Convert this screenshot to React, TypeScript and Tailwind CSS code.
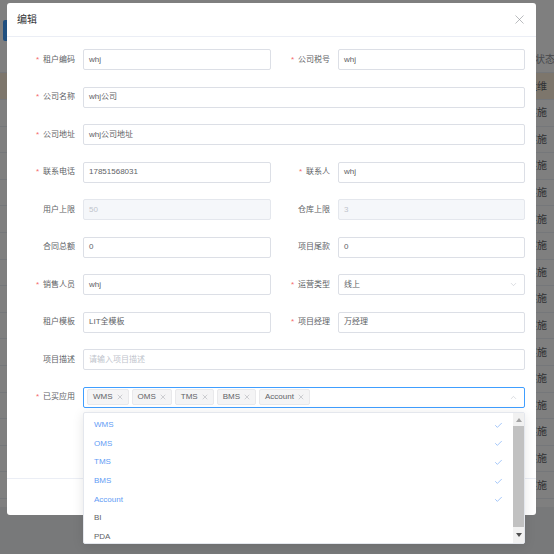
import { X, ChevronDown, ChevronUp, Check } from "lucide-react";
import clsx from "clsx";

type Field = {
  label: string;
  required?: boolean;
  value?: string;
  placeholder?: string;
  disabled?: boolean;
  select?: boolean;
};

const Label = (props: { field: Field; className: string }) => (
  <div
    className={clsx(
      "shrink-0 whitespace-nowrap pr-[8px] text-right text-[8px] text-[#606266]",
      props.className
    )}
  >
    {props.field.required && <span className="mr-[4px] text-[#f56c6c]">*</span>}
    {props.field.label}
  </div>
);

const Input = (props: { field: Field; className: string }) => {
  const f = props.field;
  return (
    <div
      className={clsx(
        "flex h-[21px] shrink-0 items-center rounded-[2px] border pl-[5px] pr-[6px] text-[8px]",
        f.disabled
          ? "border-[#e4e7ed] bg-[#f5f7fa] text-[#c0c4cc]"
          : "border-[#dcdfe6] bg-white text-[#606266]",
        props.className
      )}
    >
      <span className="flex-1 whitespace-nowrap">
        {f.value ?? <span className="text-[#c0c4cc]">{f.placeholder}</span>}
      </span>
      {f.select && <ChevronDown size={9} strokeWidth={1.5} className="text-[#c0c4cc]" />}
    </div>
  );
};

const Pair = (props: { left: Field; right: Field }) => (
  <div className="flex items-center">
    <div className="flex w-[264px] items-center">
      <Label field={props.left} className="w-[76px]" />
      <Input field={props.left} className="w-[188px]" />
    </div>
    <div className="flex w-[254px] items-center">
      <Label field={props.right} className="w-[67px]" />
      <Input field={props.right} className="w-[187px]" />
    </div>
  </div>
);

const Full = (props: { field: Field }) => (
  <div className="flex items-center">
    <Label field={props.field} className="w-[76px]" />
    <Input field={props.field} className="w-[442px]" />
  </div>
);

const apps = ["WMS", "OMS", "TMS", "BMS", "Account"];
const options = [
  { name: "WMS", on: true },
  { name: "OMS", on: true },
  { name: "TMS", on: true },
  { name: "BMS", on: true },
  { name: "Account", on: true },
  { name: "BI", on: false },
  { name: "PDA", on: false },
];

const bgRows = Array.from({ length: 15 });

export default function App() {
  return (
    <div className="relative h-[554px] w-[554px] overflow-hidden bg-[#f0f2f5] font-['Liberation_Sans','Noto_Sans_CJK_SC',sans-serif]">
      {/* page behind the dialog */}
      <div className="h-[507px] bg-white pt-[20px]">
        <div className="ml-[3px] h-[21px] w-[60px] rounded-[2px] bg-[#409eff]" />
        <div className="mt-[6px] text-[10px] text-[#606266]">
          <div className="flex h-[26px] items-center border-b border-[#ebeef5]">
            <div className="flex-1" />
            <div className="w-[19px] whitespace-nowrap text-[#909399]">状态</div>
          </div>
          <div className="flex h-[27px] items-center border-b border-[#ebeef5] bg-[#faecd8]">
            <div className="flex-1" />
            <div className="w-[27px] whitespace-nowrap">运维</div>
          </div>
          {bgRows.map((_, i) => (
            <div key={i} className="flex h-[26.6px] items-center border-b border-[#ebeef5]">
              <div className="flex-1" />
              <div className="w-[27px] whitespace-nowrap">实施</div>
            </div>
          ))}
        </div>
      </div>

      <div className="absolute inset-0 bg-black/50" />

      {/* dialog */}
      <div className="absolute left-[7px] top-[3px] flex h-[512px] w-[529px] flex-col rounded-[3px] bg-white">
        <div className="flex h-[34px] shrink-0 items-center justify-between border-b border-[#ebeef5] pl-[10px] pr-[9px]">
          <span className="text-[10px] text-[#303133]">编辑</span>
          <X size={15} strokeWidth={1} className="text-[#909399]" />
        </div>
        <div className="flex flex-1 flex-col gap-[16.5px] pt-[12px]">
          <Pair
            left={{ label: "租户编码", required: true, value: "whj" }}
            right={{ label: "公司税号", required: true, value: "whj" }}
          />
          <Full field={{ label: "公司名称", required: true, value: "whj公司" }} />
          <Full field={{ label: "公司地址", required: true, value: "whj公司地址" }} />
          <Pair
            left={{ label: "联系电话", required: true, value: "17851568031" }}
            right={{ label: "联系人", required: true, value: "whj" }}
          />
          <Pair
            left={{ label: "用户上限", value: "50", disabled: true }}
            right={{ label: "仓库上限", value: "3", disabled: true }}
          />
          <Pair left={{ label: "合同总额", value: "0" }} right={{ label: "项目尾款", value: "0" }} />
          <Pair
            left={{ label: "销售人员", required: true, value: "whj" }}
            right={{ label: "运营类型", required: true, value: "线上", select: true }}
          />
          <Pair
            left={{ label: "租户模板", value: "LIT全模板" }}
            right={{ label: "项目经理", required: true, value: "万经理" }}
          />
          <Full field={{ label: "项目描述", placeholder: "请输入项目描述" }} />
          <div className="flex items-center">
            <Label field={{ label: "已买应用", required: true }} className="w-[76px]" />
            <div className="flex h-[21px] w-[442px] items-center gap-[3px] rounded-[2px] border border-[#409eff] pl-[3px] pr-[6px]">
              {apps.map((a) => (
                <span
                  key={a}
                  className="flex h-[16px] items-center gap-[3px] rounded-[2px] border border-[#e9e9eb] bg-[#f4f4f5] pl-[5px] pr-[4px] text-[8px] text-[#909399]"
                >
                  <span className="text-[#606266]">{a}</span>
                  <X size={8} strokeWidth={1.2} />
                </span>
              ))}
              <div className="flex-1" />
              <ChevronUp size={9} strokeWidth={1.5} className="text-[#c0c4cc]" />
            </div>
          </div>
        </div>
        <div className="h-[37px] shrink-0 border-t border-[#ebeef5]" />
      </div>

      {/* open dropdown of 已买应用 */}
      <div className="absolute left-[83px] top-[412px] flex h-[132px] w-[442px] overflow-hidden rounded-[2px] border border-[#e4e7ed] bg-white shadow-[0_2px_12px_0_rgba(0,0,0,0.1)]">
        <div className="flex-1 pt-[3px]">
          {options.map((o) => (
            <div
              key={o.name}
              className={clsx(
                "flex h-[18.6px] items-center pl-[10px] pr-[10px] text-[8px]",
                o.on ? "text-[#5f9cf5]" : "text-[#606266]"
              )}
            >
              <span className="flex-1">{o.name}</span>
              {o.on && <Check size={9} strokeWidth={1.5} />}
            </div>
          ))}
        </div>
        <div className="flex w-[11px] flex-col bg-[#f1f1f1]">
          <div className="flex h-[13px] items-center justify-center">
            <svg width="6" height="4" viewBox="0 0 6 4">
              <path d="M0 4 L3 0 L6 4 Z" fill="#a3a3a3" />
            </svg>
          </div>
          <div className="h-[101px] bg-[#c1c1c1]" />
          <div className="flex flex-1 items-center justify-center">
            <svg width="6" height="4" viewBox="0 0 6 4">
              <path d="M0 0 L6 0 L3 4 Z" fill="#505050" />
            </svg>
          </div>
        </div>
      </div>
    </div>
  );
}
